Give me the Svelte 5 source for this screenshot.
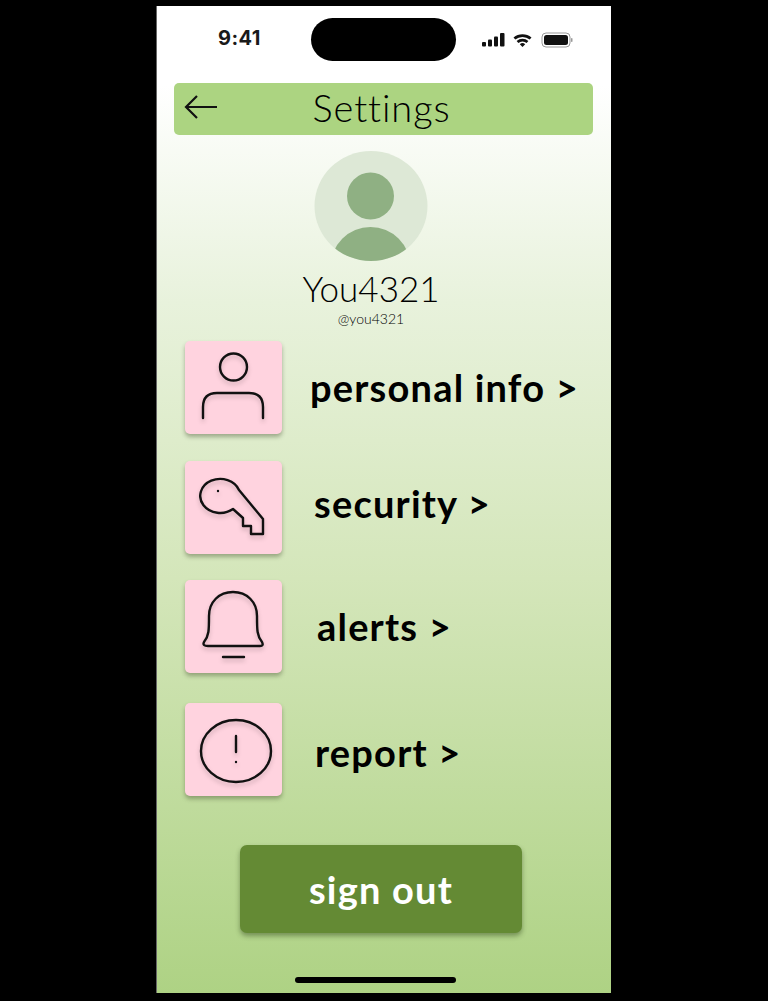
<script>
  const rows = [
    { key: 'personal', label: 'personal info >' },
    { key: 'security', label: 'security >' },
    { key: 'alerts', label: 'alerts >' },
    { key: 'report', label: 'report >' }
  ];
</script>

<div class="stage">
  <main class="screen">
    <div class="status">
      <span class="time">9:41</span>
      <div class="island"></div>
      <svg class="indicators" width="92" height="16" viewBox="0 0 92 16" aria-hidden="true">
        <g fill="#111">
          <rect x="0" y="10" width="4" height="4.5" rx="1" />
          <rect x="6" y="7.5" width="4" height="7" rx="1" />
          <rect x="12" y="4.5" width="4" height="10" rx="1" />
          <rect x="18" y="1" width="4.5" height="13.5" rx="1" />
          <path d="M31.5 5.6a14 14 0 0 1 18 0l-1.8 2a11 11 0 0 0-14.4 0zM34.6 9a9 9 0 0 1 11.8 0l-1.8 2a6 6 0 0 0-8.2 0zM37.8 12.2a4.2 4.2 0 0 1 5.4 0l-2.7 2.8z" />
          <rect x="60" y="1" width="28" height="14" rx="4" fill="none" stroke="#999" stroke-width="1" />
          <rect x="62" y="3" width="24" height="10" rx="2.5" />
          <rect x="89" y="6" width="1.5" height="4" rx="0.7" fill="#999" />
        </g>
      </svg>
    </div>

    <header class="bar">
      <svg class="back" width="34" height="26" viewBox="0 0 34 26" aria-hidden="true">
        <path d="M33 13H2M13 2 2 13l11 11" fill="none" stroke="#111" stroke-width="2.2" />
      </svg>
      <h1>Settings</h1>
    </header>

    <section class="profile">
      <svg class="avatar" width="114" height="112" viewBox="0 0 114 112" aria-hidden="true">
        <defs>
          <clipPath id="ring"><ellipse cx="57" cy="55" rx="56.5" ry="55" /></clipPath>
        </defs>
        <ellipse cx="57" cy="55" rx="56.5" ry="55" fill="#dde8d6" />
        <circle cx="56.5" cy="45" r="23.5" fill="#8fb083" />
        <g clip-path="url(#ring)">
          <ellipse cx="56.5" cy="116" rx="40" ry="40" fill="#8fb083" />
        </g>
      </svg>
      <div class="name">You4321</div>
      <div class="handle">@you4321</div>
    </section>

    <nav class="menu">
      {#each rows as row}
        <div class="row {row.key}">
          <div class="tile">
            <svg width="97" height="93" viewBox="0 0 97 93" aria-hidden="true">
              <g class="glyph">
                {#if row.key === 'personal'}
                  <circle cx="48.5" cy="26" r="13.5" />
                  <path d="M18 77V66Q18 52 32 52H64Q78 52 78 66V77" />
                {:else if row.key === 'security'}
                  <path d="M54 29A20 17 0 1 0 48 48L58 57V65H66V73H78V58Z" />
                  <circle class="dot" cx="33" cy="30" r="1.2" />
                {:else if row.key === 'alerts'}
                  <path d="M23 66H75Q79 66 77 62C72 56 72 50 72 36C72 22 62 12 48 12C34 12 24 22 24 36C24 50 24 56 19 62Q17 66 23 66Z" />
                  <path d="M38 77H59" />
                {:else}
                  <ellipse cx="51" cy="48" rx="35" ry="31" />
                  <path d="M51 33V49" />
                  <circle class="dot" cx="51" cy="59" r="1.2" />
                {/if}
              </g>
            </svg>
          </div>
          <span class="label">{row.label}</span>
        </div>
      {/each}
    </nav>

    <button class="signout">sign out</button>
    <div class="home"></div>
  </main>
</div>

<style>
  :global(body) {
    margin: 0;
    background: #000;
  }
  .stage {
    height: 1001px;
    padding: 6px 157px 8px 156px;
    box-sizing: border-box;
  }
  .screen {
    width: 455px;
    height: 987px;
    box-sizing: border-box;
    background: linear-gradient(180deg, #fff 0%, #fff 8%, #e8f2dc 30%, #d4e6ba 58%, #aed284 100%);
    font-family: Lato, "Open Sans", sans-serif;
    color: #000;
    display: flex;
    flex-direction: column;
    align-items: stretch;
    border-left: 1px solid #666;
  }
  .status {
    display: flex;
    align-items: center;
    height: 43px;
    margin-top: 12px;
  }
  .time {
    font-family: Inter, sans-serif;
    font-weight: 700;
    font-size: 20px;
    letter-spacing: 0.4px;
    color: #1a1a1a;
    width: 154px;
    box-sizing: border-box;
    padding-left: 61px;
    margin-top: -4px;
  }
  .island {
    width: 145px;
    height: 43px;
    border-radius: 22px;
    background: #000;
  }
  .indicators {
    margin-left: 26px;
    margin-top: 0;
  }
  .bar {
    margin: 22px 18px 0 17px;
    height: 52px;
    background: #acd481;
    border-radius: 5px;
    display: flex;
    align-items: center;
    position: relative;
  }
  .back {
    position: absolute;
    left: 10px;
    top: 11px;
  }
  .bar h1 {
    flex: 1;
    margin: 0 4px 4px 0;
    text-align: center;
    font-weight: 300;
    font-size: 38px;
    letter-spacing: 0.9px;
    line-height: 48px;
  }
  .profile {
    display: flex;
    flex-direction: column;
    align-items: center;
    margin-top: 16px;
    margin-right: 26px;
  }
  .avatar {
    display: block;
  }
  .name {
    font-weight: 300;
    font-size: 35px;
    line-height: 44px;
    margin-top: 3px;
  }
  .handle {
    font-size: 14px;
    font-weight: 300;
    line-height: 18px;
  }
  .menu {
    display: flex;
    flex-direction: column;
    margin-top: 13px;
    padding-left: 28px;
  }
  .row {
    display: flex;
    align-items: center;
  }
  .row + .row {
    margin-top: 27px;
  }
  .row.alerts {
    margin-top: 26px;
  }
  .row.report {
    margin-top: 30px;
  }
  .tile {
    width: 97px;
    height: 93px;
    background: #ffd3df;
    border-radius: 5px;
    box-shadow: 0 3px 4px rgba(60, 70, 40, 0.4);
    flex: none;
  }
  .tile svg {
    display: block;
  }
  .glyph {
    fill: none;
    stroke: #111;
    stroke-width: 2.4;
    stroke-linecap: round;
    stroke-linejoin: round;
    filter: drop-shadow(0 3px 2px rgba(0, 0, 0, 0.18));
  }
  .glyph .dot {
    fill: #111;
    stroke: none;
  }
  .label {
    font-weight: 700;
    font-size: 38px;
    letter-spacing: 1.2px;
    white-space: nowrap;
  }
  .personal .label { margin-left: 28px; margin-top: -2px; }
  .security .label { margin-left: 32px; margin-top: -9px; }
  .alerts .label { margin-left: 35px; margin-top: -2px; }
  .report .label { margin-left: 33px; margin-top: 4px; }
  .signout {
    margin: 49px 0 0 83px;
    width: 282px;
    height: 88px;
    background: #648a34;
    border: none;
    border-radius: 7px;
    color: #fff;
    font: 700 38px Lato, sans-serif;
    letter-spacing: 1.2px;
    box-shadow: 0 3px 5px rgba(40, 60, 20, 0.45);
    padding: 0;
  }
  .home {
    width: 161px;
    height: 6px;
    border-radius: 3px;
    background: #000;
    margin: 44px 0 0 138px;
  }
</style>
